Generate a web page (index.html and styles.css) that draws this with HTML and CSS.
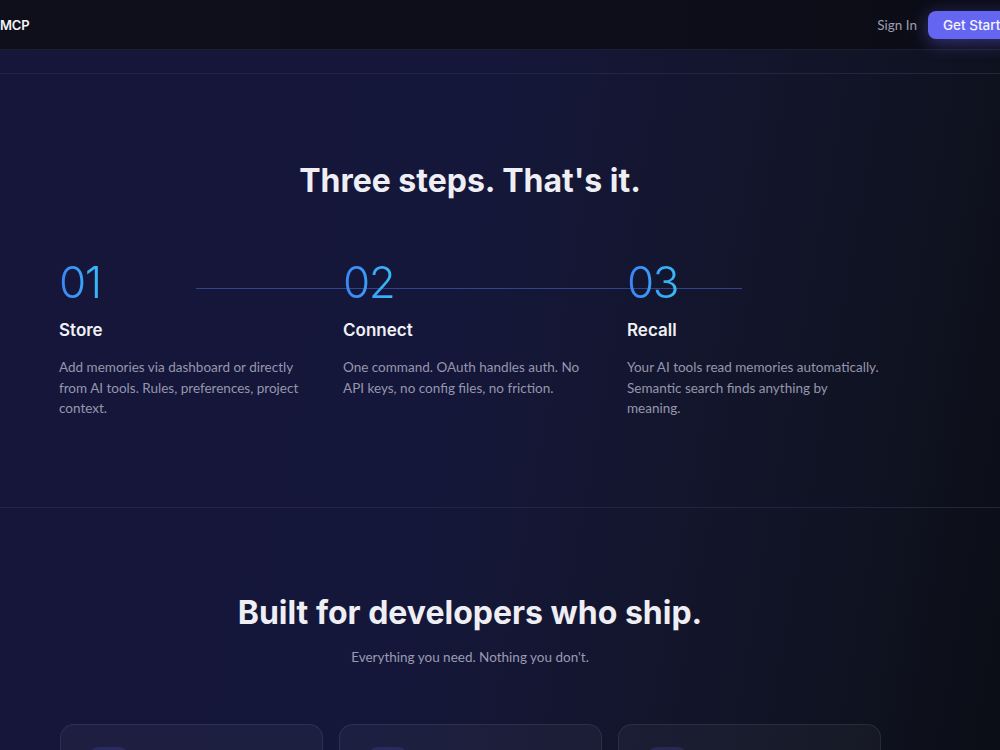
FILE: index.html
```html
<!DOCTYPE html>
<html lang="en">
<head>
<meta charset="utf-8">
<title>MCP</title>
<link rel="stylesheet" href="styles.css">
</head>
<body>
<header class="topbar">
  <div class="logo">MCP</div>
  <nav class="nav">
    <a class="signin" href="#">Sign In</a>
    <a class="cta" href="#">Get Started</a>
  </nav>
</header>
<main class="page">
  <div class="prev-end"></div>
  <section class="steps-section">
    <h2 class="heading">Three steps. That's it.</h2>
    <div class="steps">
      <div class="steps-line"></div>
      <div class="step">
        <div class="num">01</div>
        <h3 class="step-title">Store</h3>
        <p class="step-text">Add memories via dashboard or directly from AI tools. Rules, preferences, project context.</p>
      </div>
      <div class="step">
        <div class="num">02</div>
        <h3 class="step-title">Connect</h3>
        <p class="step-text">One command. OAuth handles auth. No API keys, no config files, no friction.</p>
      </div>
      <div class="step">
        <div class="num">03</div>
        <h3 class="step-title">Recall</h3>
        <p class="step-text">Your AI tools read memories automatically. Semantic search finds anything by meaning.</p>
      </div>
    </div>
  </section>
  <section class="features-section">
    <h2 class="heading">Built for developers who ship.</h2>
    <p class="sub">Everything you need. Nothing you don't.</p>
    <div class="cards">
      <div class="card"><div class="card-icon"></div></div>
      <div class="card"><div class="card-icon"></div></div>
      <div class="card"><div class="card-icon"></div></div>
    </div>
  </section>
</main>
</body>
</html>
```

FILE: styles.css
```css
html, body {
  margin: 0;
  padding: 0;
  overflow: hidden;
  height: 750px;
}
body {
  font-family: Inter, "Liberation Sans", sans-serif;
  color: #f1f1f6;
  background: linear-gradient(100deg, #15163a 0%, #15173a 45%, #121528 75%, #0b0e16 100%);
}
.topbar {
  height: 50px;
  width: 1040px;
  box-sizing: border-box;
  display: flex;
  align-items: center;
  justify-content: space-between;
  background: linear-gradient(90deg, #0f0f1c 0%, #0e0e1b 60%, #0b0c15 100%);
  border-bottom: 1px solid #1c1d2e;
}
.logo {
  font-size: 13px;
  font-weight: 600;
  color: #f4f4f8;
  letter-spacing: -0.2px;
}
.nav {
  display: flex;
  align-items: center;
  gap: 11px;
}
.signin {
  font-family: Lato, Inter, sans-serif;
  font-size: 13.5px;
  color: #9d9db4;
  text-decoration: none;
}
.cta {
  display: flex;
  align-items: center;
  height: 28px;
  width: 112px;
  box-sizing: border-box;
  padding-left: 15px;
  border-radius: 8px;
  background: #6466f1;
  color: #f5f5ff;
  font-size: 13.5px;
  font-weight: 500;
  text-decoration: none;
  box-shadow: 0 4px 18px rgba(99, 102, 241, 0.45);
  white-space: nowrap;
}
.page {
  width: 940px;
}
.prev-end {
  height: 23px;
}
.steps-section {
  border-top: 1px solid #24263f;
  border-bottom: 1px solid #23253e;
  padding: 88px 0 88px;
  width: 1000px;
}
.steps-section .heading,
.features-section .heading {
  width: 940px;
}
.heading {
  margin: 0;
  text-align: center;
  font-size: 32px;
  line-height: 38px;
  font-weight: 700;
  letter-spacing: 0;
  color: #eeeef4;
}
.steps {
  position: relative;
  width: 820px;
  margin: 60px 0 0 59px;
  display: grid;
  grid-template-columns: repeat(3, 1fr);
  gap: 32px;
}
.steps-line {
  position: absolute;
  top: 28px;
  left: 16.67%;
  right: 16.67%;
  height: 1px;
  background: rgba(70, 110, 210, 0.55);
}
.step {
  position: relative;
}
.num {
  display: inline-block;
  font-size: 44px;
  line-height: 44px;
  font-weight: 300;
  letter-spacing: -1.5px;
  background: linear-gradient(90deg, #3b82f6 0%, #38bdf8 100%);
  -webkit-background-clip: text;
  background-clip: text;
  color: transparent;
}
.step-title {
  margin: 14px 0 0;
  font-size: 17px;
  line-height: 24px;
  font-weight: 600;
  color: #f0f0f5;
}
.step-text {
  font-family: Lato, Inter, sans-serif;
  margin: 15px 0 0;
  font-size: 13.5px;
  line-height: 20.5px;
  color: #9596ad;
  max-width: 256px;
}
.features-section {
  padding-top: 86px;
}
.sub {
  font-family: Lato, Inter, sans-serif;
  width: 940px;
  margin: 15px 0 0;
  text-align: center;
  font-size: 13.5px;
  line-height: 20px;
  color: #9a9bb3;
}
.cards {
  width: 821px;
  margin: 57px 0 0 60px;
  display: grid;
  grid-template-columns: repeat(3, 1fr);
  gap: 16px;
}
.card {
  height: 200px;
  border-radius: 14px;
  border: 1px solid rgba(255, 255, 255, 0.08);
  background: rgba(255, 255, 255, 0.035);
  padding: 22px 28px;
}
.card-icon {
  width: 40px;
  height: 40px;
  border-radius: 10px;
  background: rgba(99, 102, 241, 0.18);
}
```
